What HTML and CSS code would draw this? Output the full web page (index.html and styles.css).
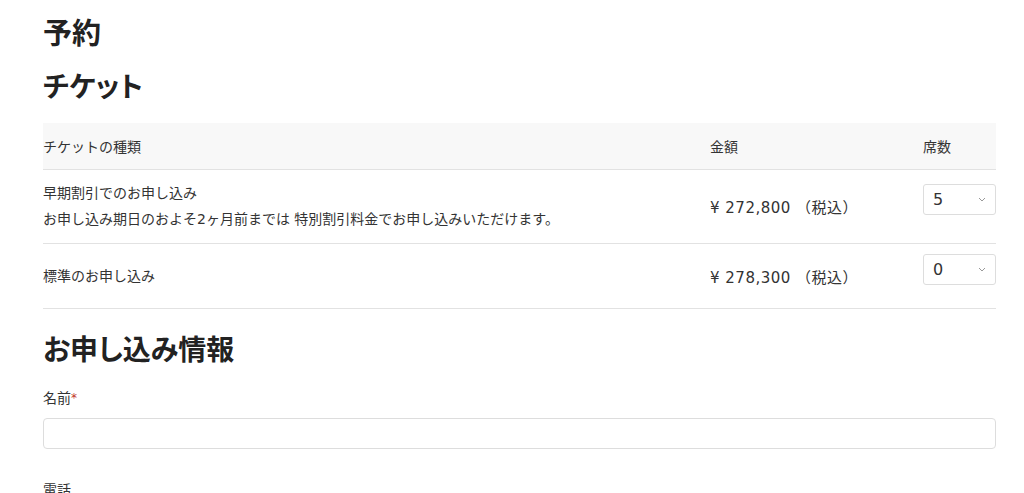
FILE: index.html
```html
<!DOCTYPE html>
<html lang="ja">
<head>
    <meta charset="UTF-8">
    <meta name="viewport" content="width=device-width, initial-scale=1.0">
    <title>予約</title>
    <link rel="stylesheet" href="styles.css">
</head>
<body>
    <main class="pagina">
        <h1 class="titulo">予約</h1>
        <h2 class="secao">チケット</h2>
        <table class="ingressos">
            <thead>
                <tr>
                    <th class="col-tipo">チケットの種類</th>
                    <th class="col-valor">金額</th>
                    <th class="col-qtd">席数</th>
                </tr>
            </thead>
            <tbody>
                <tr class="linha-desconto">
                    <td class="tipo">
                        <p>早期割引でのお申し込み</p>
                        <p>お申し込み期日のおよそ2ヶ月前までは 特別割引料金でお申し込みいただけます。</p>
                    </td>
                    <td class="valor">¥ 272,800 （税込）</td>
                    <td>
                        <div class="seletor"><span>5</span><svg width="8" height="5" viewBox="0 0 8 5"><path d="M1 1l3 3 3-3" fill="none" stroke="#999" stroke-width="1"/></svg></div>
                    </td>
                </tr>
                <tr class="linha-padrao">
                    <td class="tipo"><p>標準のお申し込み</p></td>
                    <td class="valor">¥ 278,300 （税込）</td>
                    <td>
                        <div class="seletor"><span>0</span><svg width="8" height="5" viewBox="0 0 8 5"><path d="M1 1l3 3 3-3" fill="none" stroke="#999" stroke-width="1"/></svg></div>
                    </td>
                </tr>
            </tbody>
        </table>

        <h2 class="secao secao-form">お申し込み情報</h2>
        <div class="campo">
            <label>名前<span class="obrigatorio">*</span></label>
            <div class="entrada"></div>
        </div>
        <div class="campo">
            <label>電話</label>
            <div class="entrada"></div>
        </div>
    </main>
</body>
</html>
```

FILE: styles.css
```css
body {
    font-family: "DejaVu Sans", "Noto Sans CJK JP", sans-serif;
    margin: 0;
    padding: 0;
    color: #333;
    background: #fff;
}

.pagina {
    padding: 0 28px 0 43px;
}

.titulo {
    font-family: "Noto Sans CJK JP", sans-serif;
    font-size: 29px;
    line-height: 39px;
    margin: 12px 0 0;
    color: #222;
}

.secao {
    font-family: "Noto Sans CJK JP", sans-serif;
    font-feature-settings: "palt";
    font-size: 28px;
    line-height: 39px;
    margin: 15px 0 18px;
    color: #222;
}

.secao-form {
    margin: 20px 0 20px;
}

.ingressos {
    width: 953px;
    border-collapse: collapse;
    font-size: 14px;
}

.ingressos th {
    background-color: #f8f8f8;
    font-weight: normal;
    text-align: left;
    height: 46px;
    padding: 0;
    border-bottom: 1px solid #e2e2e2;
}

.ingressos td {
    padding: 10px 0;
    border-bottom: 1px solid #e2e2e2;
    vertical-align: middle;
}

.linha-desconto td {
    padding-bottom: 11px;
}

.col-tipo {
    width: 667px;
}

.col-valor {
    width: 213px;
}

.tipo p {
    margin: 0;
    line-height: 26px;
}

.ingressos .valor {
    font-size: 15px;
    letter-spacing: 0.5px;
}

.linha-padrao td {
    height: 44px;
}

.seletor {
    width: 73px;
    height: 31px;
    box-sizing: border-box;
    border: 1px solid #ddd;
    border-radius: 3px;
    display: flex;
    align-items: center;
    justify-content: space-between;
    padding: 0 9px 0 9px;
    font-size: 16px;
    margin-bottom: 13px;
}

.campo {
    display: flex;
    flex-direction: column;
    gap: 9px;
    margin-bottom: 31px;
}

.campo label {
    font-size: 14px;
    line-height: 21px;
}

.obrigatorio {
    color: #c0392b;
    font-size: 12px;
    vertical-align: top;
}

.entrada {
    width: 953px;
    height: 31px;
    box-sizing: border-box;
    border: 1px solid #ddd;
    border-radius: 4px;
}
```
